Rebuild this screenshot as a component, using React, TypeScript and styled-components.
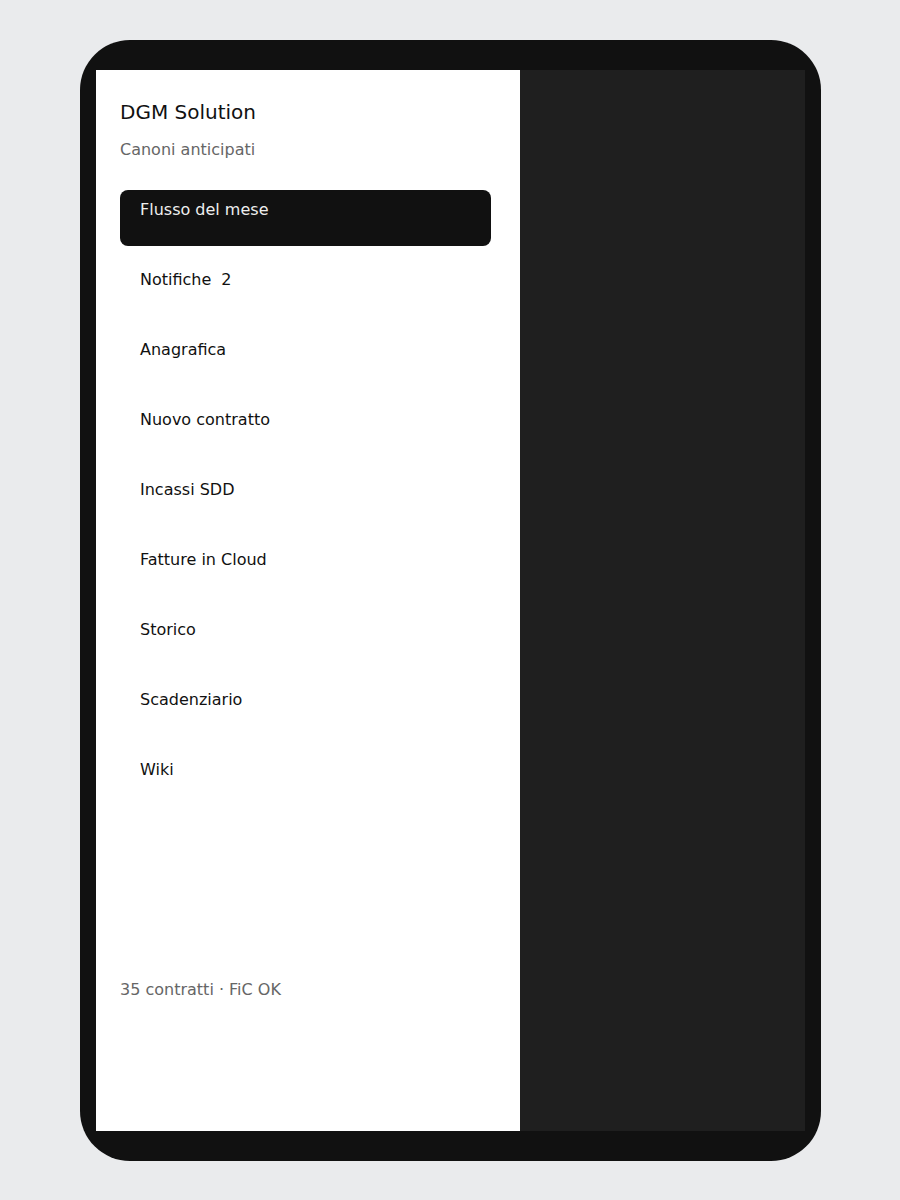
import React from 'react';
import styled, { createGlobalStyle } from 'styled-components';

const GlobalStyle = createGlobalStyle`
  html, body {
    margin: 0;
    padding: 0;
    background: #eaebed;
    font-family: "DejaVu Sans", sans-serif;
  }
  * {
    box-sizing: border-box;
  }
`;

const navItems = [
  { label: 'Flusso del mese' },
  { label: 'Notifiche', badge: '2' },
  { label: 'Anagrafica' },
  { label: 'Nuovo contratto' },
  { label: 'Incassi SDD' },
  { label: 'Fatture in Cloud' },
  { label: 'Storico' },
  { label: 'Scadenziario' },
  { label: 'Wiki' },
];

const App: React.FC = () => {
  const active = 0;

  return (
    <>
      <GlobalStyle />
      <Page>
        <Device>
          <Screen>
            <Sidebar>
              <Brand>DGM Solution</Brand>
              <Subtitle>Canoni anticipati</Subtitle>
              <Nav>
                {navItems.map((item, index) => (
                  <NavItem key={item.label} isActive={index === active}>
                    {item.label}
                    {item.badge && <Badge>{item.badge}</Badge>}
                  </NavItem>
                ))}
              </Nav>
              <Footer>35 contratti · FiC OK</Footer>
            </Sidebar>
            <Content />
          </Screen>
        </Device>
      </Page>
    </>
  );
};

const Page = styled.div`
  padding: 40px 80px;
`;

const Device = styled.div`
  width: 741px;
  height: 1121px;
  background: #111;
  border-radius: 50px;
  padding: 30px 16px;
`;

const Screen = styled.div`
  display: flex;
  height: 100%;
  background: #1f1f1f;
`;

const Sidebar = styled.aside`
  width: 424px;
  flex-shrink: 0;
  background: #fff;
  display: flex;
  flex-direction: column;
  padding: 30px 29px 131px 24px;
`;

const Brand = styled.div`
  font-size: 20px;
  color: #111;
  line-height: 24px;
`;

const Subtitle = styled.div`
  margin-top: 16px;
  font-size: 16px;
  line-height: 20px;
  color: #666;
`;

const Nav = styled.nav`
  margin-top: 30px;
  display: flex;
  flex-direction: column;
  gap: 14px;
`;

const NavItem = styled.div<{ isActive: boolean }>`
  min-height: 56px;
  padding: 10px 20px;
  border-radius: 8px;
  font-size: 16px;
  line-height: 20px;
  background: ${props => props.isActive ? '#111' : 'transparent'};
  color: ${props => props.isActive ? '#eee' : '#111'};
  cursor: pointer;
`;

const Badge = styled.span`
  margin-left: 10px;
`;

const Footer = styled.div`
  margin-top: auto;
  font-size: 16px;
  line-height: 20px;
  color: #666;
`;

const Content = styled.main`
  flex: 1;
  background: #1f1f1f;
`;

export default App;
